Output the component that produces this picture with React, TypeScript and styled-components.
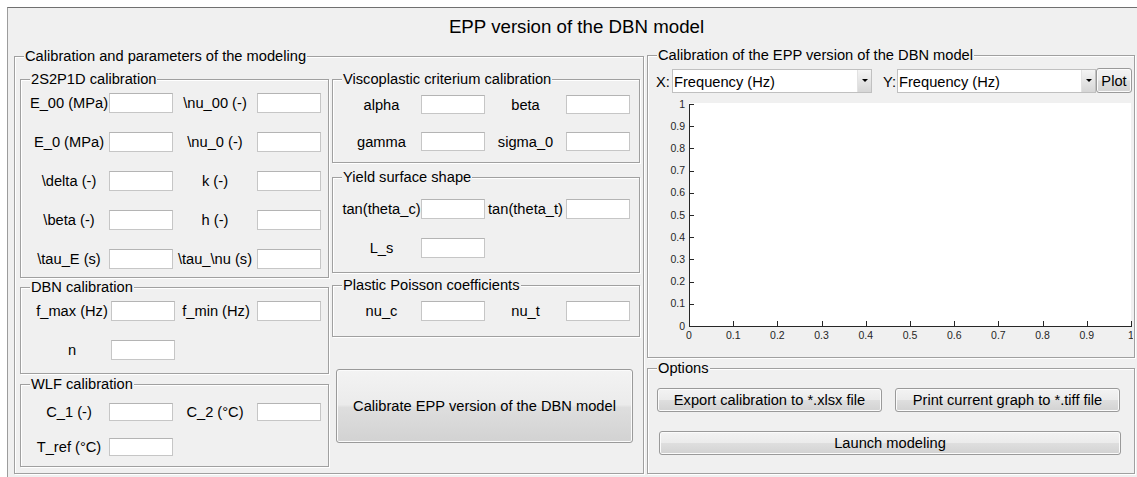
import React from 'react';
import styled, { createGlobalStyle } from 'styled-components';

const GlobalStyle = createGlobalStyle`
  html, body {
    margin: 0;
    padding: 0;
    background: #fff;
    overflow: hidden;
  }
  body {
    font-family: "Liberation Sans", Arial, sans-serif;
    font-size: 14.67px;
    color: #000;
  }
`;

const Window = styled.div`
  box-sizing: border-box;
  width: 1138px;
  height: 480px;
  margin: 7px 0 0 7px;
  background: #f0f0f0;
  border-top: 1px solid #707070;
  border-left: 1px solid #9c9c9c;
`;

const Title = styled.div`
  height: 48px;
  line-height: 37px;
  text-align: center;
  font-size: 18.7px;
`;

const Main = styled.div`
  display: flex;
  gap: 3px;
  padding-left: 6px;
`;

const Panel = styled.div<{ $w?: number; $h: number; $mt?: number }>`
  box-sizing: border-box;
  width: ${(p) => (p.$w ? `${p.$w}px` : 'auto')};
  height: ${(p) => p.$h}px;
  margin-top: ${(p) => p.$mt ?? 0}px;
  border: 1px solid #a0a0a0;
  box-shadow: inset 1px 1px 0 #fff, 1px 1px 0 #fff;
`;

const Legend = styled.div`
  width: fit-content;
  height: 16px;
  margin: -9px 0 0 9px;
  padding: 0 1px;
  line-height: 16px;
  background: #f0f0f0;
  white-space: nowrap;
`;

const Columns = styled.div`
  display: flex;
  gap: 3px;
  padding: 15px 0 0 5px;
`;

const Column = styled.div<{ $w: number }>`
  display: flex;
  flex-direction: column;
  width: ${(p) => p.$w}px;
`;

const Fields = styled.div<{ $cols: string; $pad: string; $row: number; $gap: number }>`
  display: grid;
  grid-template-columns: ${(p) => p.$cols};
  grid-auto-rows: ${(p) => p.$row}px;
  row-gap: ${(p) => p.$gap}px;
  padding: ${(p) => p.$pad};
  align-items: center;
`;

const Label = styled.span`
  text-align: center;
  white-space: nowrap;
`;

const Input = styled.input`
  box-sizing: border-box;
  width: 64px;
  height: 100%;
  margin: 0;
  padding: 0 2px;
  border: 1px solid #c6c6c6;
  border-top-color: #b4b4b4;
  background: #fff;
  font: inherit;
  outline: none;
`;

const Button = styled.button<{ $w: number; $h: number; $mt?: number; $ml?: number }>`
  box-sizing: border-box;
  width: ${(p) => p.$w}px;
  height: ${(p) => p.$h}px;
  margin: ${(p) => p.$mt ?? 0}px 0 0 ${(p) => p.$ml ?? 0}px;
  padding: 0;
  border: 1px solid #9a9a9a;
  border-radius: 3px;
  background: linear-gradient(#f3f3f3 0%, #ebebeb 48%, #dedede 52%, #d2d2d2 100%);
  box-shadow: inset 0 0 0 1px #fbfbfb;
  font: inherit;
  color: #000;
  white-space: nowrap;
`;

const RightCol = styled.div`
  display: flex;
  flex-direction: column;
  width: 488px;
  margin-top: -1px;
`;

const Toolbar = styled.div`
  display: flex;
  align-items: center;
  height: 25px;
  margin-top: 5px;
  padding-left: 8px;
`;

const AxisName = styled.span<{ $w: number; $ml?: number }>`
  width: ${(p) => p.$w}px;
  margin-left: ${(p) => p.$ml ?? 0}px;
  padding-top: 2px;
  white-space: nowrap;
`;

const Combo = styled.div<{ $w: number }>`
  box-sizing: border-box;
  display: flex;
  width: ${(p) => p.$w}px;
  height: 24px;
  background: #fff;
  border: 1px solid #c0c0c0;
`;

const ComboText = styled.span`
  flex: 1;
  padding: 1px 0 0 1px;
  line-height: 22px;
  white-space: nowrap;
`;

const ComboArrow = styled.span`
  display: flex;
  align-items: center;
  justify-content: center;
  width: 13px;
  background: linear-gradient(#f4f4f4, #d6d6d6);
  border-left: 1px solid #e2e2e2;

  &::after {
    content: '';
    border-left: 3px solid transparent;
    border-right: 3px solid transparent;
    border-top: 3px solid #000;
  }
`;

const Chart = styled.svg`
  display: block;
  margin-top: 3px;
  font-family: "Liberation Sans", Arial, sans-serif;
`;

const ButtonRow = styled.div`
  display: flex;
  gap: 13px;
  padding: 12px 0 0 9px;
`;

type Rows = [string, string?][];

const calib2s2p1d: Rows = [
  ['E_00 (MPa)', '\\nu_00 (-)'],
  ['E_0 (MPa)', '\\nu_0 (-)'],
  ['\\delta (-)', 'k (-)'],
  ['\\beta (-)', 'h (-)'],
  ['\\tau_E (s)', '\\tau_\\nu (s)'],
];
const calibDbn: Rows = [['f_max (Hz)', 'f_min (Hz)'], ['n']];
const calibWlf: Rows = [['C_1 (-)', 'C_2 (°C)'], ['T_ref (°C)']];
const viscoplastic: Rows = [['alpha', 'beta'], ['gamma', 'sigma_0']];
const yieldShape: Rows = [['tan(theta_c)', 'tan(theta_t)'], ['L_s']];
const plasticPoisson: Rows = [['nu_c', 'nu_t']];

type GridProps = { rows: Rows; cols: string; pad: string; row: number; gap: number };

const FieldGrid: React.FC<GridProps> = ({ rows, cols, pad, row, gap }) => (
  <Fields $cols={cols} $pad={pad} $row={row} $gap={gap}>
    {rows.map(([a, b]) => (
      <React.Fragment key={a}>
        <Label>{a}</Label>
        <Input />
        {b ? <Label>{b}</Label> : <span />}
        {b ? <Input /> : <span />}
      </React.Fragment>
    ))}
  </Fields>
);

// axes geometry inside the svg
const AX = { left: 41, right: 483, top: 8, bottom: 230 };
const ticks = Array.from({ length: 11 }, (_, i) => i / 10);
const fmt = (v: number) => (v === 0 ? '0' : v === 1 ? '1' : v.toFixed(1));

const Axes: React.FC = () => {
  const w = AX.right - AX.left;
  const h = AX.bottom - AX.top;
  return (
    <Chart width={485} height={256}>
      <rect x={AX.left} y={AX.top - 1} width={w} height={h + 1} fill="#fff" />
      <g stroke="#262626" strokeWidth={1} shapeRendering="crispEdges">
        <line x1={AX.left + 0.5} y1={AX.top} x2={AX.left + 0.5} y2={AX.bottom + 1} />
        <line x1={AX.left} y1={AX.bottom + 0.5} x2={AX.right + 1} y2={AX.bottom + 0.5} />
        {ticks.map((t) => {
          const y = Math.round(AX.bottom - t * h) + 0.5;
          const x = Math.round(AX.left + t * w) + 0.5;
          return (
            <React.Fragment key={t}>
              <line x1={AX.left} y1={y} x2={AX.left + 5} y2={y} />
              <line x1={x} y1={AX.bottom} x2={x} y2={AX.bottom - 5} />
            </React.Fragment>
          );
        })}
      </g>
      <g fill="#262626" fontSize={10.5}>
        {ticks.map((t) => (
          <text key={`y${t}`} x={AX.left - 4} y={AX.bottom - t * h + 3.5} textAnchor="end">
            {fmt(t)}
          </text>
        ))}
        {ticks.map((t) => (
          <text key={`x${t}`} x={AX.left + t * w} y={AX.bottom + 13} textAnchor="middle">
            {fmt(t)}
          </text>
        ))}
      </g>
    </Chart>
  );
};

export default function App() {
  return (
    <>
      <GlobalStyle />
      <Window>
        <Title>EPP version of the DBN model</Title>
        <Main>
          <Panel $w={630} $h={418}>
            <Legend>Calibration and parameters of the modeling</Legend>
            <Columns>
              <Column $w={309}>
                <Panel $h={199}>
                  <Legend>2S2P1D calibration</Legend>
                  <FieldGrid rows={calib2s2p1d} cols="80px 64px 84px 64px" pad="6px 0 0 8px" row={20} gap={19} />
                </Panel>
                <Panel $h={87} $mt={9}>
                  <Legend>DBN calibration</Legend>
                  <FieldGrid rows={calibDbn} cols="78px 64px 82px 64px" pad="6px 0 0 12px" row={20} gap={19} />
                </Panel>
                <Panel $h={83} $mt={10}>
                  <Legend>WLF calibration</Legend>
                  <FieldGrid rows={calibWlf} cols="80px 64px 84px 64px" pad="11px 0 0 8px" row={18} gap={17} />
                </Panel>
              </Column>
              <Column $w={308}>
                <Panel $h={84}>
                  <Legend>Viscoplastic criterium calibration</Legend>
                  <FieldGrid rows={viscoplastic} cols="79px 64px 81px 64px" pad="8px 0 0 9px" row={19} gap={18} />
                </Panel>
                <Panel $h={96} $mt={14}>
                  <Legend>Yield surface shape</Legend>
                  <FieldGrid rows={yieldShape} cols="79px 64px 81px 64px" pad="14px 0 0 9px" row={20} gap={19} />
                </Panel>
                <Panel $h={52} $mt={12}>
                  <Legend>Plastic Poisson coefficients</Legend>
                  <FieldGrid rows={plasticPoisson} cols="79px 64px 81px 64px" pad="8px 0 0 9px" row={20} gap={0} />
                </Panel>
                <Button $w={297} $h={74} $mt={32} $ml={4}>
                  Calibrate EPP version of the DBN model
                </Button>
              </Column>
            </Columns>
          </Panel>
          <RightCol>
            <Panel $h={303}>
              <Legend>Calibration of the EPP version of the DBN model</Legend>
              <Toolbar>
                <AxisName $w={16}>X:</AxisName>
                <Combo $w={200}>
                  <ComboText>Frequency (Hz)</ComboText>
                  <ComboArrow />
                </Combo>
                <AxisName $w={14} $ml={11}>Y:</AxisName>
                <Combo $w={199}>
                  <ComboText>Frequency (Hz)</ComboText>
                  <ComboArrow />
                </Combo>
                <Button $w={36} $h={25}>Plot</Button>
              </Toolbar>
              <Axes />
            </Panel>
            <Panel $h={106} $mt={10}>
              <Legend>Options</Legend>
              <ButtonRow>
                <Button $w={225} $h={24}>Export calibration to *.xlsx file</Button>
                <Button $w={225} $h={24}>Print current graph to *.tiff file</Button>
              </ButtonRow>
              <Button $w={462} $h={24} $mt={19} $ml={11}>
                Launch modeling
              </Button>
            </Panel>
          </RightCol>
        </Main>
      </Window>
    </>
  );
}
